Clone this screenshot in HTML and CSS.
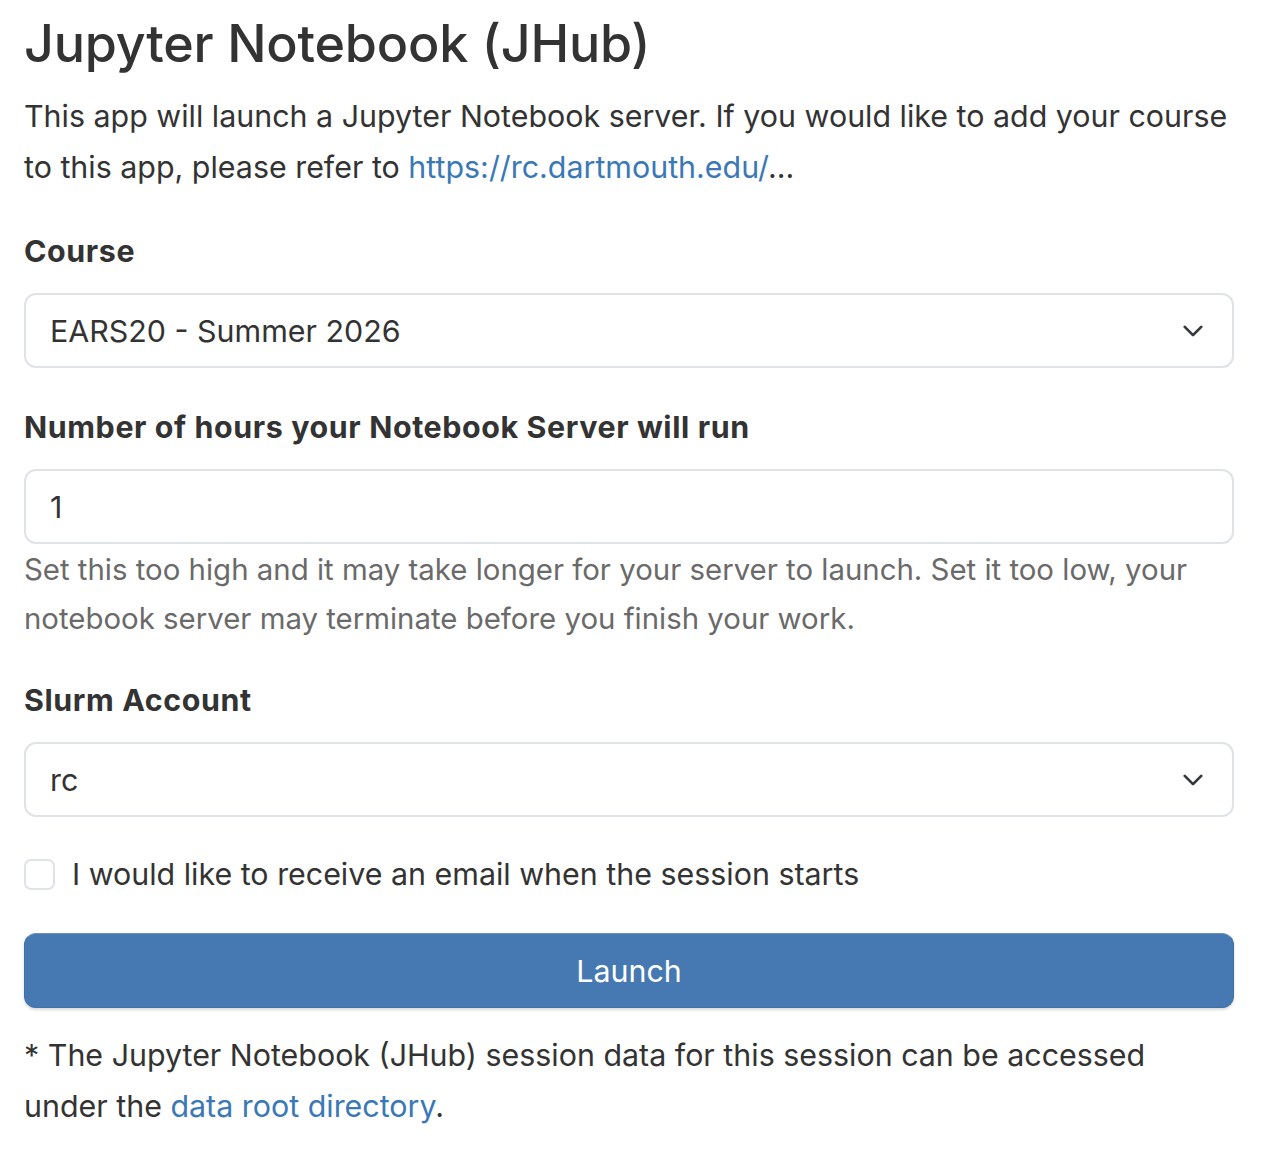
FILE: index.html
```html
<!DOCTYPE html>
<html lang="en">
<head>
    <meta charset="UTF-8">
    <meta name="viewport" content="width=device-width, initial-scale=1.0">
    <title>Jupyter Notebook (JHub)</title>
    <link rel="stylesheet" href="styles.css">
</head>
<body>
    <div class="container">
        <h1>Jupyter Notebook (JHub)</h1>
        <p class="intro">
            This app will launch a Jupyter Notebook server. If you would like to add your course
            to this app, please refer to <a href="#">https://rc.dartmouth.edu/</a>...
        </p>

        <form class="launch-form">
            <div class="form-group first">
                <label for="course">Course</label>
                <div class="select-wrap">
                    <select id="course" class="form-control">
                        <option>EARS20 - Summer 2026</option>
                    </select>
                    <svg class="chevron" viewBox="0 0 16 16"><path d="M2 5l6 6 6-6"/></svg>
                </div>
            </div>

            <div class="form-group">
                <label for="hours">Number of hours your Notebook Server will run</label>
                <input id="hours" class="form-control" type="text" value="1">
                <small class="help">Set this too high and it may take longer for your server to launch. Set it too low, your notebook server may terminate before you finish your work.</small>
            </div>

            <div class="form-group">
                <label for="account">Slurm Account</label>
                <div class="select-wrap">
                    <select id="account" class="form-control">
                        <option>rc</option>
                    </select>
                    <svg class="chevron" viewBox="0 0 16 16"><path d="M2 5l6 6 6-6"/></svg>
                </div>
            </div>

            <div class="check">
                <input id="email" type="checkbox">
                <label for="email">I would like to receive an email when the session starts</label>
            </div>

            <button type="button" class="btn-launch">Launch</button>
        </form>

        <p class="note">
            * The Jupyter Notebook (JHub) session data for this session can be accessed
            under the <a href="#">data root directory</a>.
        </p>
    </div>
</body>
</html>
```

FILE: styles.css
```css
body {
    margin: 0;
    padding: 0 30px 0 24px;
    font-family: Inter, "Open Sans", sans-serif;
    font-size: 30.4px;
    line-height: 51px;
    color: #333;
    background: #fff;
}
.container {
    width: 1216px;
}
h1 {
    margin: 10px 0 0;
    font-size: 52px;
    line-height: 68px;
    font-weight: 500;
    letter-spacing: -0.2px;
}
a {
    color: #3a78b6;
    text-decoration: none;
}
.intro {
    margin: 13px 0 33px;
}
.launch-form {
    width: 1210px;
}
.form-group {
    margin-bottom: 32px;
}
.form-group.first {
    margin-bottom: 34px;
}
label {
    display: block;
    font-weight: 700;
    letter-spacing: 0.6px;
    margin-bottom: 16px;
}
.form-control {
    display: block;
    box-sizing: border-box;
    width: 100%;
    height: 75px;
    padding: 0 24px;
    font-family: inherit;
    font-size: 30.4px;
    color: #333;
    background: #fff;
    border: 2px solid #dfe2e6;
    border-radius: 12px;
    outline: none;
    appearance: none;
    -webkit-appearance: none;
}
.select-wrap {
    position: relative;
}
.chevron {
    position: absolute;
    right: 30px;
    top: 27px;
    width: 22px;
    height: 22px;
    fill: none;
    stroke: #343a40;
    stroke-width: 2;
    stroke-linecap: round;
    stroke-linejoin: round;
}
.help {
    display: block;
    margin-top: 1px;
    font-size: 29.4px;
    line-height: 49px;
    color: #6a6a6a;
}
.check {
    display: flex;
    align-items: center;
    gap: 17px;
    margin: 2px 0 33px;
}
.check input {
    margin: 0;
    width: 31px;
    height: 31px;
    border: 2px solid #dfe2e6;
    border-radius: 7px;
    appearance: none;
    -webkit-appearance: none;
    background: #fff;
}
.check label {
    margin: 0;
    font-weight: 400;
    letter-spacing: 0;
}
.btn-launch {
    display: block;
    width: 100%;
    height: 75px;
    font-family: inherit;
    font-size: 30.4px;
    color: #fff;
    background: #4679b2;
    border: 1px solid #3f70a8;
    border-top-color: #6a93c3;
    border-radius: 12px;
    box-shadow: 0 2px 3px rgba(0, 0, 0, 0.15);
}
.note {
    width: 1180px;
    margin: 22px 0 0;
}
```
